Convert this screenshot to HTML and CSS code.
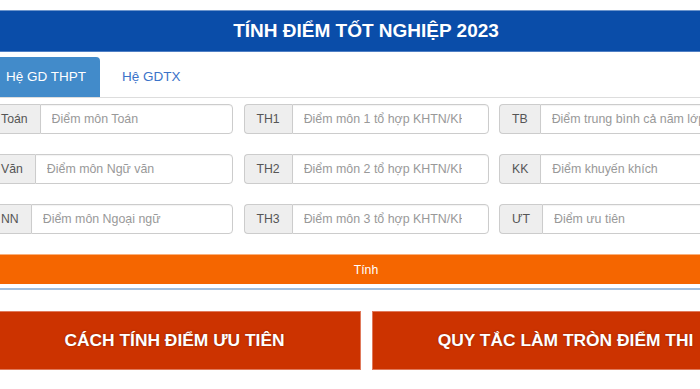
FILE: index.html
```html
<!DOCTYPE html>
<html lang="vi">
<head>
    <meta charset="UTF-8">
    <meta name="viewport" content="width=device-width, initial-scale=1.0">
    <title>Tính điểm tốt nghiệp 2023</title>
    <link rel="stylesheet" href="styles.css">
</head>
<body>
    <div class="calc-wrap">
        <h1 class="calc-title">TÍNH ĐIỂM TỐT NGHIỆP 2023</h1>

        <ul class="calc-tabs">
            <li class="tab active">Hệ GD THPT</li>
            <li class="tab">Hệ GDTX</li>
        </ul>

        <div class="calc-grid">
            <div class="input-group">
                <span class="addon">Toán</span>
                <input class="field" type="text" placeholder="Điểm môn Toán">
            </div>
            <div class="input-group">
                <span class="addon">TH1</span>
                <input class="field" type="text" placeholder="Điểm môn 1 tổ hợp KHTN/KHXH">
            </div>
            <div class="input-group">
                <span class="addon">TB</span>
                <input class="field" type="text" placeholder="Điểm trung bình cả năm lớp 12">
            </div>

            <div class="input-group">
                <span class="addon">Văn</span>
                <input class="field" type="text" placeholder="Điểm môn Ngữ văn">
            </div>
            <div class="input-group">
                <span class="addon">TH2</span>
                <input class="field" type="text" placeholder="Điểm môn 2 tổ hợp KHTN/KHXH">
            </div>
            <div class="input-group">
                <span class="addon">KK</span>
                <input class="field" type="text" placeholder="Điểm khuyến khích">
            </div>

            <div class="input-group">
                <span class="addon">NN</span>
                <input class="field" type="text" placeholder="Điểm môn Ngoại ngữ">
            </div>
            <div class="input-group">
                <span class="addon">TH3</span>
                <input class="field" type="text" placeholder="Điểm môn 3 tổ hợp KHTN/KHXH">
            </div>
            <div class="input-group">
                <span class="addon">ƯT</span>
                <input class="field" type="text" placeholder="Điểm ưu tiên">
            </div>
        </div>

        <button class="btn-calc">Tính</button>
        <hr class="divider">

        <div class="info-links">
            <a class="info-btn" href="#">CÁCH TÍNH ĐIỂM ƯU TIÊN</a>
            <a class="info-btn" href="#">QUY TẮC LÀM TRÒN ĐIỂM THI</a>
        </div>
    </div>
</body>
</html>
```

FILE: styles.css
```css
:root {
    --title-bg: #0a4da9;
    --tab-active: #428bca;
    --tab-link: #3b73c9;
    --addon-bg: #eeeeee;
    --field-border: #cccccc;
    --orange: #f56600;
    --brick: #cc3300;
}

body {
    margin: 0;
    overflow: hidden;
    background: #fff;
    font-family: 'Liberation Sans', Arial, sans-serif;
    font-size: 12.25px;
    color: #555;
}

.calc-wrap {
    width: 756px;
    margin-left: -12px;
    padding-top: 10px;
}

.calc-title {
    margin: 0;
    height: 40px;
    line-height: 40px;
    text-align: center;
    background: var(--title-bg);
    border-top: 1px solid #6d95cc;
    border-bottom: 1px solid #4f7fc4;
    color: #fff;
    font-size: 19px;
    font-weight: bold;
}

.calc-tabs {
    display: flex;
    list-style: none;
    margin: 5px 0 0;
    padding: 0 0 0 4px;
    border-bottom: 1px solid #dddddd;
}

.tab {
    height: 40px;
    line-height: 40px;
    padding: 0 14px;
    font-size: 13.5px;
    color: var(--tab-link);
    border-radius: 4px 4px 0 0;
}

.tab + .tab {
    margin-left: 8px;
}

.tab.active {
    background: var(--tab-active);
    color: #fff;
}

.calc-grid {
    display: grid;
    grid-template-columns: repeat(3, 245px);
    column-gap: 10.5px;
    row-gap: 20px;
    margin-top: 6px;
}

.input-group {
    display: flex;
    height: 30px;
}

.addon {
    display: flex;
    align-items: center;
    padding: 0 12px;
    background: var(--addon-bg);
    border: 1px solid var(--field-border);
    border-right: none;
    border-radius: 4px 0 0 4px;
    color: #555;
    box-sizing: border-box;
}

.field {
    flex: 1;
    min-width: 0;
    height: 30px;
    padding: 0 26px 0 11px;
    margin: 0;
    border: 1px solid var(--field-border);
    border-radius: 0 4px 4px 0;
    box-shadow: inset 0 1px 1px rgba(0, 0, 0, 0.05);
    font-family: inherit;
    font-size: 12.4px;
    color: #555;
    box-sizing: border-box;
    outline: none;
}

.field::placeholder {
    color: #999;
}

.btn-calc {
    display: block;
    width: 100%;
    height: 30px;
    margin-top: 20px;
    padding: 0;
    background: var(--orange);
    border: none;
    border-top: 1px solid #f9b07c;
    color: #fff;
    font-family: inherit;
    font-size: 12.25px;
    cursor: pointer;
}

.divider {
    margin: 4px 0 0;
    border: none;
    border-top: 2px solid #a3bfdc;
}

.info-links {
    display: grid;
    grid-template-columns: 373px 387px;
    gap: 11px;
    margin-top: 21px;
}

.info-btn {
    display: flex;
    align-items: center;
    justify-content: center;
    height: 59px;
    background: var(--brick);
    border: 1px solid #e07a5c;
    box-sizing: border-box;
    color: #fff;
    font-size: 17.4px;
    font-weight: bold;
    text-decoration: none;
    text-shadow: 0 0 2px rgba(90, 20, 0, 0.6);
}
```
